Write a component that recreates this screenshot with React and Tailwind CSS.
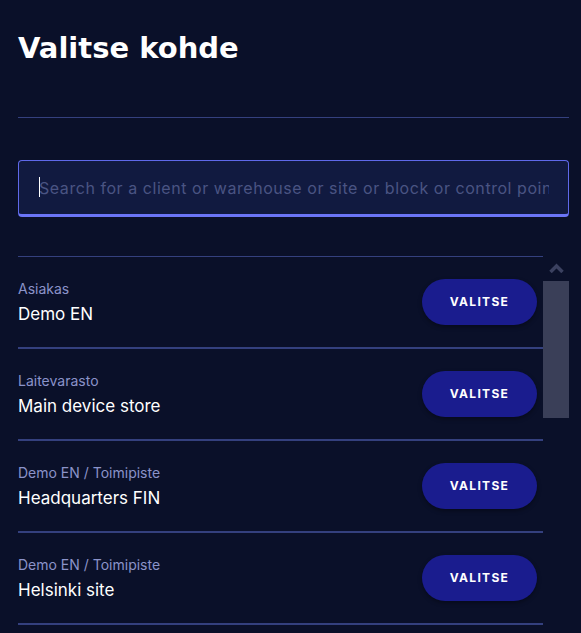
import React from "react";

const rows = [
  { label: "Asiakas", name: "Demo EN" },
  { label: "Laitevarasto", name: "Main device store" },
  { label: "Demo EN / Toimipiste", name: "Headquarters FIN" },
  { label: "Demo EN / Toimipiste", name: "Helsinki site" },
];

export default function App() {
  return (
    <div
      className="w-full h-[633px] overflow-hidden bg-[#0a1029] pl-[18px] pr-[12px] pt-[30px]"
      style={{ fontFamily: "Inter, 'Noto Sans', sans-serif" }}
    >
      <h1
        className="text-[29px] leading-[36px] font-bold text-white"
        style={{ fontFamily: "'DejaVu Sans', Inter, sans-serif" }}
      >
        Valitse kohde
      </h1>
      <div className="mt-[51px] h-px bg-[#34407e]" />
      <div className="relative mt-[42px] h-[57px] rounded-[4px] border border-b-[3px] border-[#5f69ea] border-b-[#6b75f7] bg-[#111a40] pl-[20px] pr-[19px] flex items-center overflow-hidden">
        <span className="whitespace-nowrap text-[16px] tracking-[0.55px] text-[#4a5483] overflow-hidden">
          Search for a client or warehouse or site or block or control point
        </span>
        <span className="absolute left-[20px] top-[16px] h-[20px] w-px bg-white" />
      </div>
      <div className="mt-[39px] flex">
        <div className="w-[526px] border-t border-[#34407e]">
          {rows.map((r, i) => (
            <div
              key={i}
              className="h-[92px] border-b-2 border-[#34407e] flex items-center justify-between pr-[6px]"
            >
              <div className="flex flex-col gap-[7px]">
                <div className="text-[14px] leading-[16px] text-[#8b93c9]">{r.label}</div>
                <div className="text-[17px] leading-[20px] text-white">{r.name}</div>
              </div>
              <button className="w-[115px] h-[46px] rounded-full bg-[#1a1c8e] text-white text-[12px] font-bold tracking-[1.3px] shadow-[0_2px_4px_rgba(0,0,0,0.35)]">
                VALITSE
              </button>
            </div>
          ))}
        </div>
        <div className="w-[26px] flex flex-col items-center">
          <svg width="15" height="11" viewBox="0 0 15 11" className="mt-[6px]">
            <polyline points="1.5,10 7.5,4 13.5,10" fill="none" stroke="#3b4160" strokeWidth="3.5" />
          </svg>
          <div className="mt-[8px] w-[26px] h-[137px] bg-[#3a3f58]" />
        </div>
      </div>
    </div>
  );
}
